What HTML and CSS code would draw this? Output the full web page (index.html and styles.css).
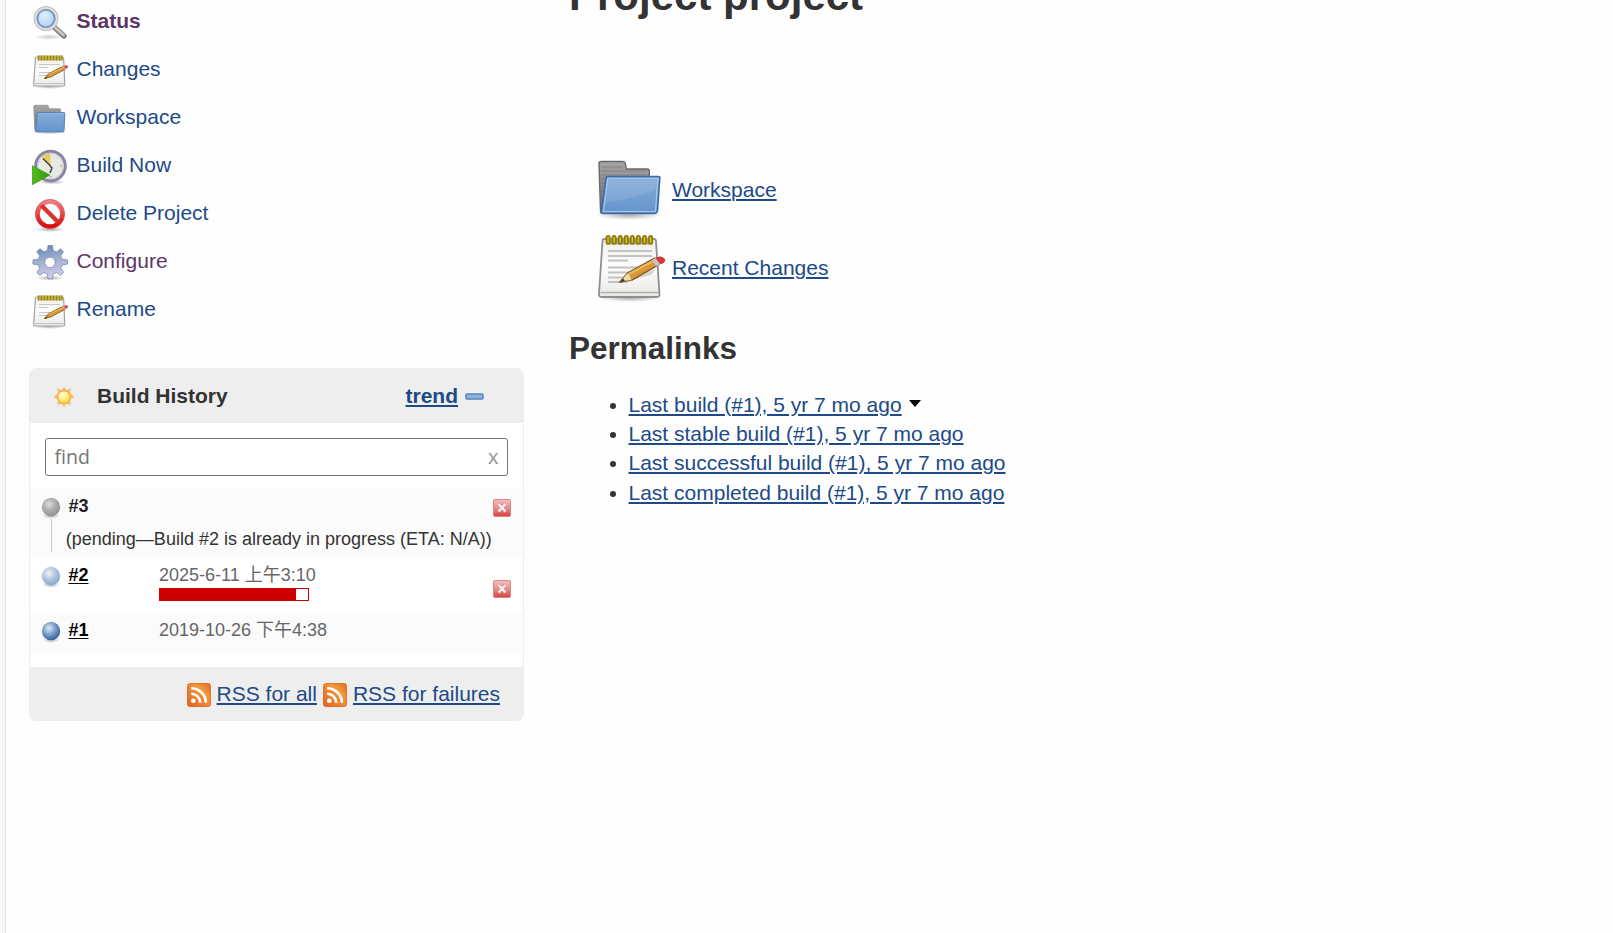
FILE: index.html
```html
<!DOCTYPE html>
<html lang="en">
<head>
<meta charset="utf-8">
<title>Project project</title>
<link rel="stylesheet" href="styles.css">
</head>
<body>
<svg class="defs" width="0" height="0" aria-hidden="true">
  <defs>
    <linearGradient id="paper" x1="0" y1="0" x2="0" y2="1"><stop offset="0" stop-color="#eeeeec"/><stop offset=".5" stop-color="#fdfdfd"/><stop offset="1" stop-color="#e8e8e6"/></linearGradient>
    <linearGradient id="blue" x1="0" y1="0" x2="0" y2="1"><stop offset="0" stop-color="#84acd9"/><stop offset="1" stop-color="#6494cc"/></linearGradient>
    <linearGradient id="grey" x1="0" y1="0" x2="0" y2="1"><stop offset="0" stop-color="#a5a5a5"/><stop offset="1" stop-color="#6d6d6d"/></linearGradient>
    <linearGradient id="red" x1="0" y1="0" x2="0" y2="1"><stop offset="0" stop-color="#ef8080"/><stop offset="1" stop-color="#d40c0c"/></linearGradient>
    <linearGradient id="stop" x1="0" y1="0" x2="0" y2="1"><stop offset="0" stop-color="#f6bcbc"/><stop offset=".5" stop-color="#e79090"/><stop offset="1" stop-color="#d83c3c"/></linearGradient>
    <linearGradient id="gear" x1="0" y1="0" x2=".2" y2="1"><stop offset="0" stop-color="#5f7fae"/><stop offset=".5" stop-color="#9fb0d2"/><stop offset="1" stop-color="#cfc9e6"/></linearGradient>
    <linearGradient id="green" x1="0" y1="0" x2="1" y2="0"><stop offset="0" stop-color="#58bd22"/><stop offset="1" stop-color="#2f9410"/></linearGradient>
    <linearGradient id="rss" x1="0" y1="1" x2="1" y2="0"><stop offset="0" stop-color="#dc6426"/><stop offset=".5" stop-color="#f08a38"/><stop offset=".65" stop-color="#f59a3a"/><stop offset="1" stop-color="#de6a2b"/></linearGradient>
    <radialGradient id="sun" cx=".35" cy=".3" r=".8"><stop offset="0" stop-color="#fffde8"/><stop offset=".5" stop-color="#fdee84"/><stop offset="1" stop-color="#fbd62c"/></radialGradient>
    <radialGradient id="lens" cx=".4" cy=".35" r=".7"><stop offset="0" stop-color="#e2effc"/><stop offset="1" stop-color="#aacbf0"/></radialGradient>
    <radialGradient id="ballGrey" cx=".4" cy=".35" r=".65"><stop offset="0" stop-color="#dedede"/><stop offset=".5" stop-color="#b0b0b0"/><stop offset="1" stop-color="#929292"/></radialGradient>
    <radialGradient id="ballPale" cx=".4" cy=".35" r=".65"><stop offset="0" stop-color="#eef3f1"/><stop offset=".5" stop-color="#b5c9e1"/><stop offset="1" stop-color="#8ba8d0"/></radialGradient>
    <radialGradient id="ballBlue" cx=".4" cy=".35" r=".65"><stop offset="0" stop-color="#e2ecec"/><stop offset=".5" stop-color="#7fa3cc"/><stop offset="1" stop-color="#33649f"/></radialGradient>
    <radialGradient id="shade"><stop offset="0" stop-color="#000" stop-opacity=".32"/><stop offset="1" stop-color="#000" stop-opacity="0"/></radialGradient>
    <symbol id="i-notepad" viewBox="0 0 72 72">
      <ellipse cx="35" cy="67" rx="30" ry="4" fill="url(#shade)"/>
      <path d="M9.500 8H59q1.800 0 2 2l3.500 53q.2 3-2.500 3H6.500q-2.700 0-2.500-3l3.500-53q.2-2 2-2z" fill="url(#paper)" stroke="#8f908c" stroke-width="1.800"/>
      <path d="M11 7.500h46v6H11z" fill="#a9a68a"/>
      <path d="M5.500 61.500h58" stroke="#aeaeab" stroke-width="1.600"/>
      <path d="M13 20h44M13 25h44M13 29.500h20M13 36.500h44M13 41.500h32M13 46.500h30M13 51h19" stroke="#c2c2c0" stroke-width="1.800"/>
      <g fill="#d8c72f" stroke="#8f7d0a" stroke-width="1.800"><rect x="11.500" y="4.800" width="3.200" height="8" rx="1.600"/><rect x="17.500" y="4.800" width="3.200" height="8" rx="1.600"/><rect x="23.600" y="4.800" width="3.200" height="8" rx="1.600"/><rect x="29.700" y="4.800" width="3.200" height="8" rx="1.600"/><rect x="35.700" y="4.800" width="3.200" height="8" rx="1.600"/><rect x="41.800" y="4.800" width="3.200" height="8" rx="1.600"/><rect x="47.900" y="4.800" width="3.200" height="8" rx="1.600"/><rect x="54" y="4.800" width="3.200" height="8" rx="1.600"/></g>
      <path d="M28 51l28-7 5-6-24 8z" fill="#000" opacity=".15"/>
      <path d="M25 51l7.500-9L60 27l4 6.500-27 15.500z" fill="#d9973a" stroke="#80561b" stroke-width="1.400"/>
      <path d="M33 43.500L60 29" stroke="#edb960" stroke-width="2.500"/>
      <path d="M25 51l7.500-9q3 1 4.500 7z" fill="#f0dda5" stroke="#a58245" stroke-width=".8"/>
      <path d="M24.500 51.500l3.500-4 2 2.500z" fill="#333"/>
      <path d="M57 29l4-2.500 4.500 6.500-4.500 2.500z" fill="#c5c3c6"/>
      <path d="M61 27q5-2.500 8 .5t-3.500 5.500z" fill="#e23232" stroke="#a94038" stroke-width=".8"/>
    </symbol>
    <symbol id="i-notepad-small" viewBox="0 0 36 36">
      <ellipse cx="17.500" cy="33.500" rx="16" ry="2.500" fill="url(#shade)"/>
      <path d="M4.500 4h26q1 0 1.100 1l1.200 26.500q0 1.500-1.500 1.500H3q-1.400 0-1.300-1.500L3.500 5q0-1 1-1z" fill="url(#paper)" stroke="#a3a3a0" stroke-width="1.200"/>
      <path d="M2.500 30.500h30" stroke="#c4c4c2" stroke-width="1"/>
      <path d="M5.500 2.500h25v5h-25z" fill="#c0ae45"/>
      <path d="M6.500 2.500v5M9.500 2.500v5M12.500 2.500v5M15.500 2.500v5M18.500 2.500v5M21.500 2.500v5M24.500 2.500v5M27.500 2.500v5M30 2.500v5" stroke="#94821c" stroke-width="1"/>
      <path d="M7 11.500h21M7 14.500h9M7 19.500h20M7 22.500h9" stroke="#c8c8c6" stroke-width="1.200"/>
      <path d="M12.500 25.500l4-4.800L31.500 13l1.800 3.300-14.500 7.700z" fill="#d4963d" stroke="#91672a" stroke-width=".9"/>
      <path d="M17 21.500l14-7" stroke="#edba63" stroke-width="1"/>
      <path d="M12 26l2.200-2.500 1.300 1.500z" fill="#493720"/>
      <path d="M30.500 13.400l1.500-.9 1.800 3.500-1.500.8z" fill="#c9a9a9"/>
      <path d="M32 12.700q3-1.200 3.800.6T33.800 16z" fill="#de3a3a"/>
    </symbol>
    <symbol id="i-folder" viewBox="0 0 72 72">
      <ellipse cx="34" cy="62" rx="33" ry="5" fill="url(#shade)"/>
      <path d="M4 10.500q0-2 2-2h22q2 0 2.300 2l1 5.500h21q2 0 2 2v42H7.500q-2 0-2-2z" fill="url(#grey)" stroke="#686868" stroke-width="1.400"/>
      <path d="M6 14h22M6 18h46M6 22h46M6 26h5M6 30h5M6 34h4M6 38h4M6 42h4M6 46h3" stroke="#666" stroke-width="1" opacity=".45"/>
      <path d="M12.500 23.500h51q1.500 0 1.300 1.500L62.500 57.500q-.4 3-3 3H8q-2 0-1.700-2l4.700-33.500q.3-1.500 1.500-1.500z" fill="url(#blue)" stroke="#3d6ba6" stroke-width="1.600"/>
      <path d="M12.800 25.500h50l-2.300 33H8.500z" fill="none" stroke="#a9c8e8" stroke-width="1.200"/>
      <path d="M13.500 26.500h48l-1.500 10Q42 45 11 50z" fill="#fff" opacity=".1"/>
    </symbol>
    <symbol id="i-folder-small" viewBox="0 0 36 36">
      <ellipse cx="17.500" cy="30.500" rx="17" ry="3" fill="url(#shade)"/>
      <path d="M1.800 5.500q0-1.200 1.200-1.200h12q1.200 0 1.400 1l.6 2.500h10.500q1.200 0 1.200 1.200v20H4q-1.200 0-1.200-1z" fill="url(#grey)" stroke="#8b8b8b" stroke-width=".7"/>
      <path d="M6.500 11.500H32q.9 0 .8.9l-.7 17q-.1 1.500-1.500 1.500H4.300q-1 0-.9-1l2-17.500q.1-.9 1.100-.9z" fill="url(#blue)" stroke="#4e7fba" stroke-width=".9"/>
      <path d="M6.500 12.500h25" stroke="#9bbde2" stroke-width=".8"/>
    </symbol>
    <symbol id="i-search" viewBox="0 0 36 36">
      <ellipse cx="17" cy="32" rx="15" ry="3" fill="url(#shade)" opacity=".6"/>
      <path d="M22 22l10 9" stroke="#858585" stroke-width="5.500" stroke-linecap="round"/>
      <path d="M22 21.500l9.500 8.500" stroke="#c9c9c9" stroke-width="2.600" stroke-linecap="round"/>
      <circle cx="14" cy="13.500" r="10.700" fill="url(#lens)" stroke="#aaa" stroke-width="3.200"/>
      <circle cx="14" cy="13.500" r="10.700" fill="none" stroke="#e2e2e2" stroke-width="1.800"/>
      <circle cx="14" cy="13.500" r="8.500" fill="none" stroke="#7098cc" stroke-width="1.600"/>
    </symbol>
    <symbol id="i-clock" viewBox="0 0 36 36">
      <ellipse cx="20" cy="33" rx="14" ry="2.500" fill="url(#shade)"/>
      <circle cx="18.500" cy="17" r="14.800" fill="#e9e9e4" stroke="#8883a8" stroke-width="3"/>
      <circle cx="18.500" cy="17" r="12.800" fill="none" stroke="#c9c9cf" stroke-width="1"/>
      <path d="M18.500 17l-9-9q4-4 9-4z" fill="#e8cc62"/>
      <path d="M18.500 17L11 9.500M18 17l2 2-2 5" stroke="#444" stroke-width="1.500" fill="none"/>
      <circle cx="29" cy="17" r=".8" fill="#888"/><circle cx="18.500" cy="27.500" r=".8" fill="#888"/>
      <path d="M0 16.500L18 26 1 35.500H0z" fill="url(#green)" stroke="#3c9c17" stroke-width=".6"/>
    </symbol>
    <symbol id="i-forbid" viewBox="0 0 36 36">
      <ellipse cx="18" cy="32.500" rx="15" ry="2.500" fill="url(#shade)"/>
      <circle cx="18" cy="17" r="12.500" fill="#fff" stroke="url(#red)" stroke-width="4.500"/>
      <path d="M9.500 8.500l17 17" stroke="#d93030" stroke-width="4.500"/>
      <circle cx="18" cy="17" r="14.600" fill="none" stroke="#d65a5a" stroke-width=".7"/>
    </symbol>
    <symbol id="i-gear" viewBox="0 0 36 36">
      <ellipse cx="18" cy="33" rx="14" ry="2.500" fill="url(#shade)"/>
      <path fill-rule="evenodd" d="M15.300 5.500l.7-5h4.500l.7 5 3.300 1.400 4-3.200 3 3-2.800 4.200 1.500 3.300 5.300.7v4.200l-5.300.8-1.500 3.300 3 4-3 3.200-4.200-3-3.300 1.400-.7 5h-4.500l-.7-5-3.300-1.400-4.200 3-3-3.200 3-4-1.500-3.300-5.300-.8v-4.200l5.300-.7 1.500-3.300L4.800 6.800l3-3 4.200 3zM18 12.200a5.200 5.200 0 1 0 .01 0z" fill="url(#gear)" stroke="#798cb3" stroke-width=".8"/>
    </symbol>
    <symbol id="i-stop" viewBox="0 0 18 18">
      <rect x=".5" y=".5" width="17" height="17" rx="1.500" fill="url(#stop)" stroke="#df8585"/>
      <path d="M5.500 5l7 7.500m0-7.500l-7 7.500" stroke="#d48888" stroke-width="4"/>
      <path d="M5.500 5l7 7.500m0-7.500l-7 7.500" stroke="#f7eded" stroke-width="2.400"/>
    </symbol>
    <symbol id="i-rss" viewBox="0 0 24 24">
      <rect width="24" height="24" rx="3.500" fill="url(#rss)"/>
      <rect x=".7" y=".7" width="22.600" height="22.600" rx="3" fill="none" stroke="#d9692d" stroke-width=".8"/>
      <circle cx="6.300" cy="17.700" r="2.300" fill="#fff"/>
      <path d="M4.200 10.800a9 9 0 0 1 9 9M4.200 5.200a14.600 14.600 0 0 1 14.600 14.600" fill="none" stroke="#fff" stroke-width="2.600"/>
    </symbol>
  </defs>
</svg>
<div class="page">
  <aside class="side">
    <nav class="tasks">
      <a class="task current"><svg><use href="#i-search"/></svg>Status</a>
      <a class="task"><svg><use href="#i-notepad-small"/></svg>Changes</a>
      <a class="task"><svg><use href="#i-folder-small"/></svg>Workspace</a>
      <a class="task"><svg><use href="#i-clock"/></svg>Build Now</a>
      <a class="task"><svg><use href="#i-forbid"/></svg>Delete Project</a>
      <a class="task visited"><svg><use href="#i-gear"/></svg>Configure</a>
      <a class="task"><svg><use href="#i-notepad-small"/></svg>Rename</a>
    </nav>
    <section class="history">
      <header class="history-head">
        <svg class="sun" viewBox="0 0 24 24"><path d="M12 .5l2.200 4.200 5.500-2.400-1.400 5.200 5.200 4.500-5.200 2.600 1.400 6-5.500-1.400L12 23.500l-2.200-4.300-5.500 1.400 1.400-6L.5 12l5.200-4.500-1.400-5.200 5.500 2.400z" fill="#f9b24a" opacity=".8"/><circle cx="12" cy="12" r="7" fill="url(#sun)" stroke="#f9a63a" stroke-width="1.200"/></svg>
        <span class="history-title">Build History</span>
        <a class="link">trend</a>
        <svg class="collapse" viewBox="0 0 19 7"><rect x="1" y="1" width="17" height="5" rx="1" fill="#8fb4dc" stroke="#5784bc" stroke-width="1.600"/></svg>
      </header>
      <div class="find"><span class="find-hint">find</span><span class="find-clear">x</span></div>
      <div class="build build-pending">
        <div class="ball-col"><svg class="ball" viewBox="0 0 20 22"><ellipse cx="10" cy="18.500" rx="9" ry="3.500" fill="url(#shade)"/><circle cx="10" cy="10" r="9.200" fill="url(#ballGrey)"/></svg><i class="stem"></i></div>
        <b class="num">#3</b>
        <svg class="stop"><use href="#i-stop"/></svg>
        <div class="cause">(pending—Build #2 is already in progress (ETA: N/A))</div>
      </div>
      <div class="build build-running">
        <svg class="ball" viewBox="0 0 20 22"><ellipse cx="10" cy="18.500" rx="9" ry="3.500" fill="url(#shade)"/><circle cx="10" cy="10" r="9.200" fill="url(#ballPale)"/></svg>
        <b class="num num-link">#2</b>
        <div class="when">2025-6-11 上午3:10<div class="bar"><div class="bar-fill" style="width:92%"></div></div></div>
        <svg class="stop"><use href="#i-stop"/></svg>
      </div>
      <div class="build build-done">
        <svg class="ball" viewBox="0 0 20 22"><ellipse cx="10" cy="18.500" rx="9" ry="3.500" fill="url(#shade)"/><circle cx="10" cy="10" r="9.200" fill="url(#ballBlue)"/></svg>
        <b class="num num-link">#1</b>
        <div class="when">2019-10-26 下午4:38</div>
      </div>
      <footer class="feeds">
        <svg><use href="#i-rss"/></svg><a class="link">RSS for all</a>
        <svg><use href="#i-rss"/></svg><a class="link">RSS for failures</a>
      </footer>
    </section>
  </aside>
  <main class="main">
    <h1>Project project</h1>
    <div class="shortcuts">
      <div class="shortcut"><svg><use href="#i-folder"/></svg><a class="link">Workspace</a></div>
      <div class="shortcut"><svg><use href="#i-notepad"/></svg><a class="link">Recent Changes</a></div>
    </div>
    <h2>Permalinks</h2>
    <ul class="permalinks">
      <li><a class="link">Last build (#1), 5 yr 7 mo ago</a><svg class="caret" viewBox="0 0 12 7"><path d="M0 0h12L6 7z"/></svg></li>
      <li><a class="link">Last stable build (#1), 5 yr 7 mo ago</a></li>
      <li><a class="link">Last successful build (#1), 5 yr 7 mo ago</a></li>
      <li><a class="link">Last completed build (#1), 5 yr 7 mo ago</a></li>
    </ul>
  </main>
</div>
</body>
</html>
```
FILE: styles.css
```css
* { box-sizing: border-box; }
html, body { height: 100%; margin: 0; overflow: hidden; }
body {
  background: #f8f8f8;
  color: #333;
  font: 21px/1.4 "Liberation Sans", "Noto Sans CJK SC", sans-serif;
}
svg { display: block; flex: none; }
.defs { position: absolute; }
.page {
  display: flex;
  height: 933px;
  margin-left: 5px;
  border-left: 1px solid #e3e3e3;
  background: #fefefe;
}
.side { width: 563px; flex: none; padding-left: 23px; }
.link { color: #204a87; text-decoration: underline; text-decoration-thickness: 2px; text-underline-offset: 2px; }

.tasks { margin-top: -3px; padding-left: 3px; }
.task { display: flex; align-items: center; height: 48px; gap: 8.5px; color: #204a87; }
.task svg { width: 36px; height: 36px; margin-top: 3px; }
.current { font-weight: bold; }
.current, .visited { color: #5c3566; }

.history {
  width: 495px;
  height: 353px;
  margin-top: 35px;
  border: 1px solid #eee;
  border-radius: 7px;
  overflow: hidden;
  background: #fff;
}
.history-head { display: flex; align-items: center; height: 54px; background: #eee; padding: 0 39px 0 23px; font-weight: bold; }
.sun { width: 22px; height: 22px; margin-top: 2px; }
.history-title { flex: 1; margin-left: 22px; }
.collapse { width: 19px; height: 7px; margin: 1px 0 0 7px; }
.find {
  display: flex;
  justify-content: space-between;
  align-items: center;
  height: 38px;
  margin: 15px 15px 12px;
  padding: 0 8.5px;
  border: 1px solid #767676;
  border-radius: 3px;
}
.find-hint { font: 19.5px/34px "Open Sans", sans-serif; color: #757575; margin-top: -1px; }
.find-clear { color: #999; line-height: 36px; }

.build { display: grid; grid-template-columns: 27px 91px 1fr 18px; font-size: 18px; line-height: 24px; padding: 6px 12px 0 11px; align-items: start; }
.ball { width: 20px; height: 22px; margin-top: 3px; }
.num { color: #222; margin-left: .5px; }
.num-link { color: #000; text-decoration: underline; text-decoration-thickness: 1px; text-underline-offset: 2px; }
.stop { width: 18px; height: 18px; }
.when { color: #666; }
.build-pending { height: 69px; background: #fbfbfb; grid-template-rows: 33px 24px; }
.build-pending .ball-col { grid-row: 1 / 3; }
.build-pending .stop { grid-column: 4; margin-top: 5px; }
.build-pending .cause { grid-column: 2 / 5; margin-left: -2.2px; white-space: nowrap; }
.stem { display: block; width: 1px; height: 33px; margin-left: 10px; background: #ccc; }
.build-running { height: 55px; }
.build-running .stop { margin-top: 17px; }
.build-done { height: 43px; background: #fbfbfb; }
.bar { width: 150px; height: 13px; margin-top: 1px; border: 1px solid #c00; background: #fff; }
.bar-fill { height: 100%; background: #c00; }
.feeds { display: flex; align-items: center; justify-content: flex-end; height: 54px; margin-top: 12px; padding-right: 23px; background: #eee; }
.feeds svg { width: 24px; height: 24px; margin: 2px 6px 0; }

.main { flex: 1; }
h1 { margin: -25px 0 0; font-size: 42px; line-height: 42px; }
.shortcuts { margin: 134px 0 0 26px; }
.shortcut { display: flex; align-items: center; height: 78px; gap: 5px; }
.shortcut svg { width: 72px; height: 72px; margin-bottom: 3px; }
h2 { margin: 23px 0 24px; font-size: 31.5px; line-height: 36px; }
.permalinks { margin: -.4px 0 0; padding-left: 59.5px; }
.caret { display: inline-block; width: 12px; height: 7px; margin-left: 7px; vertical-align: 5px; }
```
